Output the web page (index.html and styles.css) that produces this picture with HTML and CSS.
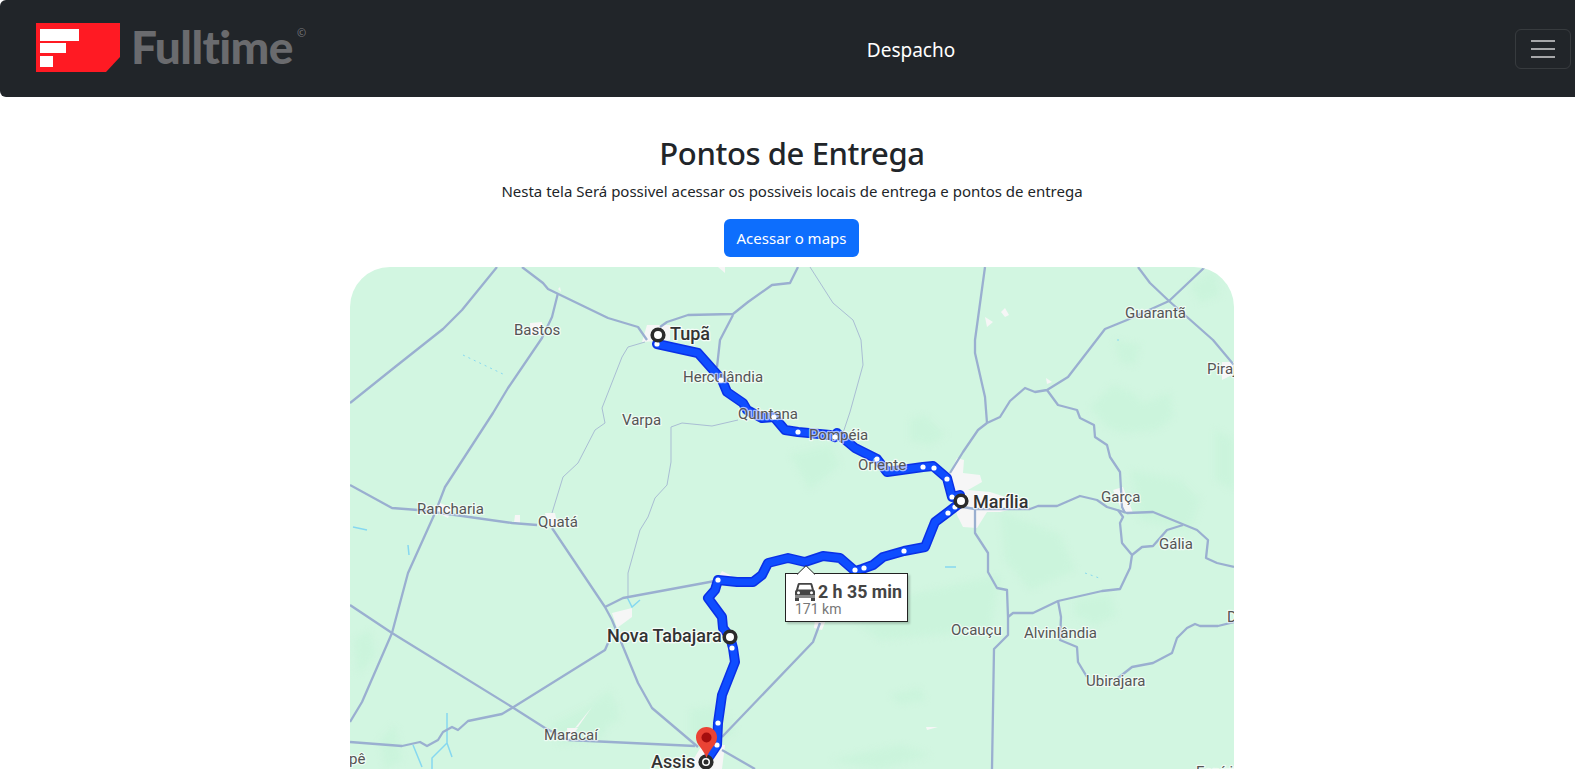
FILE: index.html
```html
<!DOCTYPE html>
<html lang="pt-BR">
<head>
<meta charset="utf-8">
<title>Pontos de Entrega</title>
<link rel="stylesheet" href="styles.css">
</head>
<body>
<nav class="navbar">
  <a class="brand" href="#">
    <svg class="brand-mark" viewBox="0 0 84 49" aria-hidden="true">
      <polygon class="mark-red" points="0,0 84,0 84,34 70,49 0,49"/>
      <rect class="mark-white" x="4" y="6" width="39" height="12"/>
      <rect class="mark-white" x="4" y="20" width="26" height="10"/>
      <rect class="mark-white" x="4" y="33" width="13" height="11"/>
    </svg>
    <span class="brand-name">Fulltime</span><span class="brand-c">©</span>
  </a>
  <span class="nav-title">Despacho</span>
  <button class="toggler" type="button" aria-label="Menu">
    <svg class="toggler-icon" viewBox="0 0 24 18" aria-hidden="true">
      <path d="M0 1H24M0 9H24M0 17H24"/>
    </svg>
  </button>
</nav>

<main class="content">
  <h1 class="title">Pontos de Entrega</h1>
  <p class="lead">Nesta tela Será possivel acessar os possiveis locais de entrega e pontos de entrega</p>
  <a class="btn" href="#">Acessar o maps</a>

  <div class="map">
    <svg class="map-canvas" viewBox="350 267 884 540" aria-label="Mapa da rota">
      <g class="forest">
        <path d="M1090 407L1113 385 1133 393 1143 403 1170 393 1173 417 1157 430 1123 433 1107 427Z"/>
        <path d="M1114 340L1140 345 1135 365 1120 362Z"/>
        <path d="M1190 285L1215 270 1220 295 1200 303Z"/>
        <path d="M1130 470L1180 480 1200 500 1190 530 1140 520Z"/>
        <path d="M1215 430L1234 440V490L1215 480Z"/>
        <path d="M1000 510L1060 535 1075 570 1030 590 1005 560Z"/>
        <path d="M1075 600L1110 595 1116 615 1095 625 1075 615Z"/>
        <path d="M890 695L920 688 925 700 900 704Z"/>
        <path d="M840 610L1000 575 990 630 880 640Z"/>
        <path d="M354 640L370 630 376 655 358 675Z"/>
        <path d="M790 455L830 445 840 465 810 490Z"/>
        <path d="M910 420L925 415 945 435 930 445 910 440Z"/>
        <path d="M550 725L600 700 620 705 600 740 560 745Z"/>
        <path d="M590 705L610 690 620 720 595 730Z"/>
        <path d="M380 740L395 725 402 760 385 769Z"/>
        <path d="M690 710L720 705 735 730 715 750 690 735Z"/>
        <path d="M830 760L900 745 930 755 880 769Z"/>
      </g>
      <g class="town">
        <path d="M642 342L647 325 670 325 670 340Z"/>
        <path d="M530 323L542 322 542 335 530 335Z"/>
        <path d="M440 503L452 508 448 518 436 512Z"/>
        <path d="M515 515L520 515 520 523 514 523Z"/>
        <path d="M545 513L555 513 558 527 548 525Z"/>
        <path d="M558 289L560 287 561 292Z"/>
        <path d="M950 473L957 458 964 460 963 473 980 475 982 482 968 490 990 492 1030 505 1000 512 987 512 977 528 963 527 957 515Z"/>
        <path d="M985 317L993 322 987 327Z"/>
        <path d="M1001 312L1005 308 1009 315 1005 317Z"/>
        <path d="M1046 378L1052 382 1047 384Z"/>
        <path d="M1222 362H1234L1232 375 1222 380Z"/>
        <path d="M1113 490L1123 487 1133 513 1123 513Z"/>
        <path d="M612 613L632 608 632 617 617 628Z"/>
        <path d="M718 578L722 571 732 576 722 582Z"/>
        <path d="M567 728L578 728 568 740Z"/>
        <path d="M575 728L592 707 578 727Z"/>
        <path d="M926 727L938 727 927 730Z"/>
        <path d="M815 620H826L822 630 814 628Z"/>
        <path d="M690 765L702 745 725 745 722 769H690Z"/>
        <path d="M718 267H725V273Z"/>
      </g>
      <g class="water">
        <path d="M413 745L422 767M447 713V743L432 758V769M447 743L452 757M627 597L632 607 640 600M353 527L367 530M408 545L409 555M945 567H956"/>
      </g>
      <path class="water-dots" d="M463 355L505 375M1085 573L1102 579M1118 339V341"/>
      <g class="river">
        <path d="M645 342L628 347 622 357 602 408 605 423 595 430 578 463 563 477 552 513"/>
        <path d="M738 420L712 426 682 423 671 427V462L667 485 655 498 648 517 640 530 628 573 628 598"/>
        <path d="M810 267L833 303 853 320 861 340 863 365 850 412 843 433"/>
      </g>
      <g class="road">
        <path d="M350 403L395 367 443 329 462 310 497 267"/>
        <path d="M522 267L543 283 548 289 608 318 638 327 647 340"/>
        <path d="M558 293L552 317 542 338 508 388 493 413 445 487 435 513 408 573 392 633 362 702 350 722"/>
        <path d="M350 485L392 508 418 510 455 515 512 523 537 525"/>
        <path d="M552 528L605 607 612 620 638 683 652 708 698 747"/>
        <path d="M605 607L623 598 715 581"/>
        <path d="M350 605L392 633 512 707 545 728 568 740 695 746"/>
        <path d="M350 742L402 746 420 742 427 746 438 740 443 732 452 727 458 730 468 721 502 714 512 708 605 650 608 643"/>
        <path d="M722 737L813 642 820 623"/>
        <path d="M722 750L755 769"/>
        <path d="M660 327L667 322 688 315 733 314 748 302 772 285 790 283 798 267"/>
        <path d="M733 315L720 340 717 367"/>
        <path d="M985 267L975 340V353L985 397 987 423"/>
        <path d="M950 473L963 452 978 430 987 423 1000 417 1010 401 1025 388 1035 392 1047 390 1068 377 1105 329 1127 320 1169 301 1205 267"/>
        <path d="M1138 267L1150 283 1169 301 1213 340 1234 365"/>
        <path d="M1047 390L1058 405 1077 410 1080 418 1094 425 1095 437 1107 445 1110 457 1120 472 1122 507 1125 513"/>
        <path d="M963 507L975 509H1030L1038 506H1057L1080 496 1097 500 1107 507 1127 513 1153 512 1197 530 1208 540 1206 558 1217 563 1234 567"/>
        <path d="M975 510V533L988 553V572L997 588 1007 590 1008 617V635L994 649 992 769"/>
        <path d="M1008 617L1013 613H1033L1058 601 1102 591 1120 589 1130 568 1132 555 1122 543 1120 523 1123 517 1118 510"/>
        <path d="M1132 555L1142 547 1153 546 1167 530 1183 525"/>
        <path d="M1058 601L1061 617 1060 640 1077 647 1078 662 1087 677"/>
        <path d="M1118 678L1132 667 1153 663 1172 653 1177 638 1187 628 1195 624 1200 626H1218L1234 622"/>
      </g>
      <path class="route-outer" d="M657 344L698 353 722 380 727 392 743 403 747 410 762 418 774 417 785 430 798 432 830 435 835 437 837 433 843 438 855 448 877 459 887 472 923 467 933 466 947 478 952 497 960 495 960 503 947 513 935 522 925 547 904 551 883 557 873 565 862 569 855 571 840 558 823 556 805 562 788 558 768 563 762 575 753 582 737 582 718 580 715 590 708 598 722 617 723 628 730 637 733 648 735 662 722 695 718 723 717 745 707 760"/>
      <path class="route-inner" d="M657 344L698 353 722 380 727 392 743 403 747 410 762 418 774 417 785 430 798 432 830 435 835 437 837 433 843 438 855 448 877 459 887 472 923 467 933 466 947 478 952 497 960 495 960 503 947 513 935 522 925 547 904 551 883 557 873 565 862 569 855 571 840 558 823 556 805 562 788 558 768 563 762 575 753 582 737 582 718 580 715 590 708 598 722 617 723 628 730 637 733 648 735 662 722 695 718 723 717 745 707 760"/>
      <g class="label">
        <text x="514" y="335">Bastos</text>
        <text x="622" y="425">Varpa</text>
        <text x="683" y="382">Herculândia</text>
        <text x="738" y="419">Quintana</text>
        <text x="417" y="514">Rancharia</text>
        <text x="538" y="527">Quatá</text>
        <text x="809" y="440">Pompéia</text>
        <text x="858" y="470">Oriente</text>
        <text x="1125" y="318">Guarantã</text>
        <text x="1207" y="374">Piraj</text>
        <text x="1101" y="502">Garça</text>
        <text x="1159" y="549">Gália</text>
        <text x="951" y="635">Ocauçu</text>
        <text x="1024" y="638">Alvinlândia</text>
        <text x="1086" y="686">Ubirajara</text>
        <text x="1227" y="622">D</text>
        <text x="544" y="740">Maracaí</text>
        <text x="349" y="764">pê</text>
        <text x="1196" y="777">Espírit</text>
      </g>
      <g class="dots">
        <circle cx="657" cy="344" r="2.6"/><circle cx="721" cy="380" r="2.6"/><circle cx="774" cy="417" r="2.6"/>
        <circle cx="798" cy="432" r="2.6"/><circle cx="835" cy="437" r="2.6"/><circle cx="877" cy="459" r="2.6"/>
        <circle cx="923" cy="467" r="2.6"/><circle cx="934" cy="468" r="2.6"/><circle cx="947" cy="479" r="2.6"/>
        <circle cx="952" cy="497" r="2.6"/><circle cx="948" cy="513" r="2.6"/><circle cx="955" cy="507" r="2.6"/>
        <circle cx="904" cy="551" r="2.6"/><circle cx="864" cy="568" r="2.6"/><circle cx="855" cy="570" r="2.6"/>
        <circle cx="718" cy="580" r="2.6"/><circle cx="732" cy="648" r="2.6"/><circle cx="718" cy="723" r="2.6"/>
        <circle cx="717" cy="745" r="2.6"/>
      </g>
      <g class="stop">
        <circle cx="658" cy="335" r="5.8"/>
        <circle cx="961" cy="501" r="5.8"/>
        <circle cx="730" cy="637" r="5.8"/>
        <circle cx="706" cy="762" r="5.8"/>
      </g>
      <circle class="stop-core" cx="706" cy="762" r="2.5"/>
      <g class="label-major">
        <text x="670" y="340">Tupã</text>
        <text x="973" y="508">Marília</text>
        <text x="607" y="642">Nova Tabajara</text>
        <text x="651" y="768">Assis</text>
      </g>
      <path class="pin" d="M706.5 727C700.6 727 696 731.6 696 737.5 696 745 703 748 706.5 758 710 748 717 745 717 737.5 717 731.6 712.4 727 706.5 727Z"/>
      <circle class="pin-core" cx="706.5" cy="737.5" r="5"/>
    </svg>

    <div class="popup">
      <svg class="popup-arrow" viewBox="0 0 18 10" aria-hidden="true">
        <path d="M0 9.5L9 .7 18 9.5"/>
      </svg>
      <div class="popup-main">
        <svg class="car" viewBox="0 0 20 18" aria-hidden="true">
          <path class="car-body" d="M4.4 0H15.6C16.5 0 17.1.5 17.4 1.300L19 7C19.600 7.300 20 8 20 8.800V14H0V8.800C0 8 .4 7.300 1 7L2.600 1.300C2.900.5 3.500 0 4.400 0ZM4.500 1.800L3.200 6.500H16.800L15.500 1.800ZM3.500 8.300A1.500 1.500 0 1 0 3.500 11.300 1.500 1.500 0 1 0 3.500 8.300ZM16.500 8.300A1.500 1.500 0 1 0 16.500 11.300 1.500 1.500 0 1 0 16.500 8.300Z"/>
          <path class="car-body" d="M0 15H4V18H0ZM16 15H20V18H16Z"/>
          <path class="car-band" d="M0 12H20V15H0Z"/>
        </svg>
        <span class="popup-time">2 h 35 min</span>
      </div>
      <div class="popup-dist">171 km</div>
    </div>
  </div>
</main>
</body>
</html>
```
FILE: styles.css
```css
* { box-sizing: border-box; }

html, body {
  margin: 0;
  height: 100%;
  overflow: hidden;
}

body {
  font-family: "Noto Sans", "Open Sans", sans-serif;
  font-size: 16px;
  color: #212529;
  background: #fff;
}

.navbar {
  height: 97px;
  padding: 0 4px 0 36px;
  background: #212529;
  border-radius: 6px 0 0 6px;
  display: flex;
  align-items: center;
  justify-content: space-between;
}

.brand {
  width: 271px;
  align-self: flex-start;
  margin-top: 23px;
  display: flex;
  align-items: flex-start;
  text-decoration: none;
}

.brand-mark { width: 84px; height: 49px; flex: none; }
.mark-red { fill: #ff1a23; }
.mark-white { fill: #fff; }

.brand-name {
  margin-left: 11px;
  font-family: "Lato", sans-serif;
  font-weight: 900;
  font-size: 46px;
  line-height: 47px;
  letter-spacing: -.6px;
  color: #6a6b6e;
}

.brand-c {
  margin: 3px 0 0 4px;
  font-size: 11px;
  line-height: 14px;
  color: #77787b;
}

.nav-title {
  margin-top: 2px;
  font-size: 19px;
  color: #fff;
}

.toggler {
  width: 56px;
  height: 40px;
  padding: 0;
  background: none;
  border: 1px solid rgba(255, 255, 255, .1);
  border-radius: 6px;
  display: flex;
  align-items: center;
  justify-content: center;
}

.toggler-icon { width: 24px; height: 18px; }
.toggler-icon path { stroke: #a6a7a9; stroke-width: 2; fill: none; }

.content {
  padding: 34px 0 0 9px;
  display: flex;
  flex-direction: column;
  align-items: center;
}

.title {
  margin: 0;
  font-size: 31px;
  font-weight: 500;
  line-height: 44px;
  letter-spacing: -.4px;
}

.lead {
  margin: 4px 0 0;
  font-size: 15px;
  line-height: 24px;
}

.btn {
  margin: 16px 1px 0 0;
  width: 135px;
  height: 38px;
  background: #0d6efd;
  border-radius: 6px;
  color: #fff;
  font-size: 15px;
  text-decoration: none;
  display: flex;
  align-items: center;
  justify-content: center;
}

.map {
  position: relative;
  flex: none;
  margin-top: 10px;
  width: 884px;
  height: 540px;
  background: #d2f6e1;
  border-radius: 40px;
  overflow: hidden;
}

.map-canvas { display: block; width: 884px; height: 540px; }

.forest { filter: blur(3px); }
.forest path { fill: #cbf4dc; }
.town path { fill: #f6f6f6; }
.water path { fill: none; stroke: #86d8f0; stroke-width: 1.500; }
.water-dots { fill: none; stroke: #86d8f0; stroke-width: 1; stroke-dasharray: 2 4; }
.river path { fill: none; stroke: #a9bdd3; stroke-width: 1; }
.road path { fill: none; stroke: #9aafd0; stroke-width: 2.300; stroke-linejoin: round; }

.route-outer, .route-inner { fill: none; stroke-linejoin: round; stroke-linecap: round; }
.route-outer { stroke: #0a30e6; stroke-width: 10; }
.route-inner { stroke: #0f4dff; stroke-width: 7; }

.label text, .label-major text {
  font-family: "Roboto", sans-serif;
  paint-order: stroke;
  stroke-linejoin: round;
}

.label text {
  font-size: 15px;
  fill: #555;
  stroke: rgba(255, 255, 255, .65);
  stroke-width: 2.500px;
}

.label-major text {
  font-size: 18px;
  font-weight: 500;
  fill: #333;
  stroke: rgba(255, 255, 255, .8);
  stroke-width: 2.500px;
}

.dots circle { fill: #fff; }
.stop circle { fill: #fff; stroke: #2b2b2b; stroke-width: 3.600; }
.stop-core { fill: #2b2b2b; }
.pin { fill: #ea4335; }
.pin-core { fill: #a50e0e; }

.popup {
  position: absolute;
  left: 435px;
  top: 306px;
  width: 123px;
  height: 49px;
  padding: 9px 0 0 9px;
  background: #fff;
  border: 1px solid #222;
  box-shadow: 2px 2px 2px rgba(0, 0, 0, .2);
}

.popup-arrow {
  position: absolute;
  left: 11px;
  top: -9px;
  width: 18px;
  height: 10px;
}

.popup-arrow path { fill: #fff; stroke: #222; stroke-width: 1; }

.popup-main {
  display: flex;
  align-items: center;
  gap: 3px;
  height: 18px;
}

.car { width: 20px; height: 18px; flex: none; }
.car-body { fill: #444; }
.car-band { fill: #888; }

.popup-time {
  font-family: "Roboto", sans-serif;
  font-size: 17.800px;
  font-weight: 700;
  line-height: 18px;
  color: #444;
  white-space: nowrap;
}

.popup-dist {
  font-family: "Roboto", sans-serif;
  font-size: 14px;
  line-height: 16px;
  color: #777;
}
```
